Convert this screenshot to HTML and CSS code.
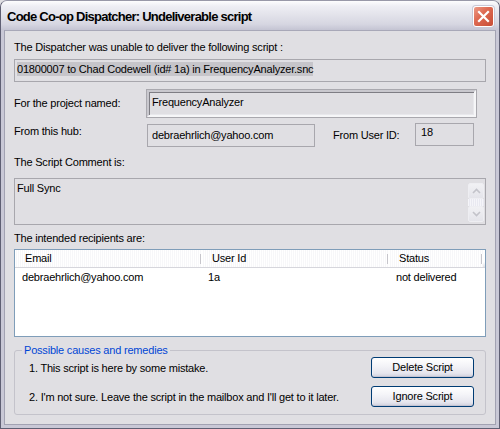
FILE: index.html
```html
<!DOCTYPE html>
<html>
<head>
<meta charset="utf-8">
<link rel="stylesheet" href="styles.css">
</head>
<body>
<div class="window">
  <div class="titlebar">
    <span class="title">Code Co-op Dispatcher: Undeliverable script</span>
    <span class="close"><svg width="13" height="13" viewBox="0 0 13 13"><path d="M2 2 L11 11 M11 2 L2 11" stroke="#fff" stroke-width="2.2" stroke-linecap="square"/></svg></span>
  </div>
  <div class="content">
    <div class="label l1">The Dispatcher was unable to deliver the following script :</div>
    <div class="field f1"><span class="sel">01800007 to Chad Codewell (id# 1a) in FrequencyAnalyzer.snc</span></div>

    <div class="row r-project">
      <div class="label rowlabel">For the project named:</div>
      <div class="field inset">FrequencyAnalyzer</div>
    </div>

    <div class="row r-hub">
      <div class="label rowlabel hublabel">From this hub:</div>
      <div class="field hub">debraehrlich@yahoo.com</div>
      <div class="label uidlabel">From User ID:</div>
      <div class="field uid">18</div>
    </div>

    <div class="label l-comment">The Script Comment is:</div>
    <div class="field comment">
      <span class="ctext">Full Sync</span>
      <div class="vscroll">
        <div class="sbtn"><svg width="9" height="6" viewBox="0 0 9 6"><path d="M1 5 L4.5 1.5 L8 5" fill="none" stroke="#c3c3ca" stroke-width="1.6"/></svg></div>
        <div class="strack"></div>
        <div class="sbtn"><svg width="9" height="6" viewBox="0 0 9 6"><path d="M1 1 L4.5 4.5 L8 1" fill="none" stroke="#c3c3ca" stroke-width="1.6"/></svg></div>
      </div>
    </div>

    <div class="label l-recip">The intended recipients are:</div>
    <div class="list">
      <div class="lhead">
        <div class="hcell c-email">Email</div>
        <div class="hcell c-uid">User Id</div>
        <div class="hcell c-status">Status</div>
      </div>
      <div class="lrow">
        <div class="cell c-email">debraehrlich@yahoo.com</div>
        <div class="cell c-uid">1a</div>
        <div class="cell c-status">not delivered</div>
      </div>
    </div>

    <div class="group">
      <div class="gtitle">Possible causes and remedies</div>
      <div class="grow g1">
        <div class="gtext">1. This script is here by some mistake.</div>
        <div class="btn">Delete Script</div>
      </div>
      <div class="grow g2">
        <div class="gtext">2. I'm not sure. Leave the script in the mailbox and I'll get to it later.</div>
        <div class="btn">Ignore Script</div>
      </div>
    </div>
  </div>
</div>
</body>
</html>
```
FILE: styles.css
```css
html, body {
  margin: 0;
  padding: 0;
  background: #e0dfe3;
}
body {
  width: 500px;
  height: 429px;
  overflow: hidden;
  font-family: "Liberation Sans", Arial, sans-serif;
  font-size: 11px;
  letter-spacing: -0.2px;
  color: #000;
}
.window {
  width: 500px;
  height: 429px;
  box-sizing: border-box;
  border: 1px solid #5f5f73;
  border-top-color: #9898a8;
  border-radius: 7px 7px 0 0;
  background: #c9c8d6;
  padding: 0 3px 3px 3px;
  display: flex;
  flex-direction: column;
}
.titlebar {
  height: 29px;
  margin: 0 -3px;
  padding: 0 5px 0 6px;
  display: flex;
  align-items: center;
  justify-content: space-between;
  border-radius: 6px 6px 0 0;
  background: linear-gradient(#fdfdfe 0%, #eeeef4 18%, #e2e2ea 50%, #d6d6e1 80%, #c4c4d3 100%);
}
.title {
  font-family: "Liberation Sans", Arial, sans-serif;
  font-weight: bold;
  font-size: 13px;
  color: #000;
  letter-spacing: -0.75px;
  padding-top: 1px;
}
.close {
  width: 19px;
  height: 19px;
  border: 1px solid #fff;
  border-radius: 3px;
  background: linear-gradient(135deg, #ec9a86 0%, #de6a52 40%, #c84d36 100%);
  display: flex;
  align-items: center;
  justify-content: center;
  box-shadow: 0 0 0 1px #c9c8d6;
  margin-top: 1px;
}
.content {
  flex: 1;
  background: #e0dfe3;
  border: 1px solid #a2a2b2;
  border-top-color: #a8a8b8;
  padding: 0 9px 0 9px;
  display: flex;
  flex-direction: column;
}
.label {
  line-height: 13px;
  white-space: nowrap;
}
.l1 { margin-top: 10px; }
.field {
  box-sizing: border-box;
  border: 1px solid #a8a7ad;
  background: #e0dfe3;
  white-space: nowrap;
  line-height: 13px;
}
.f1 {
  height: 23px;
  margin-top: 5px;
  padding: 3px 2px;
}
.sel { background: #c6c5ca; padding: 1px 0; }
.row {
  display: flex;
  align-items: flex-start;
}
.r-project {
  margin-top: 8px;
  height: 27px;
}
.rowlabel { width: 133px; padding-top: 7px; }
.inset {
  width: 329px;
  height: 27px;
  border: 2px solid #c9c8ce;
  border-right-color: #f6f6f8;
  border-bottom-color: #f6f6f8;
  box-shadow: inset 1px 1px 0 #7e7d84, inset -1px -1px 0 #e8e8ec, 0 0 0 1px #a9a8ae;
  padding: 4px 3px;
  background: #e0dfe3;
}
.r-hub { margin-top: 6px; }
.hublabel { padding-top: 2px; }
.hub {
  width: 168px;
  height: 23px;
  margin-top: 1px;
  padding: 4px 4px;
}
.uidlabel {
  margin-left: 18px;
  padding-top: 6px;
  width: 82px;
}
.uid {
  width: 59px;
  height: 23px;
  padding: 2px 5px;
}
.l-comment { margin-top: 9px; }
.comment {
  margin-top: 9px;
  height: 47px;
  display: flex;
  justify-content: space-between;
  padding: 2px 1px 2px 2px;
}
.ctext { padding-top: 1px; }
.vscroll {
  width: 16px;
  display: flex;
  flex-direction: column;
  margin-top: 2px;
}
.sbtn {
  box-sizing: border-box;
  height: 16px;
  border: 1px solid #eeeef2;
  border-radius: 2px;
  background: linear-gradient(#f1f1f4, #e4e4ea);
  display: flex;
  align-items: center;
  justify-content: center;
}
.strack {
  flex: 1;
  background: repeating-linear-gradient(90deg, #f5f5f9 0 1px, #e9e9f1 1px 2px);
}
.l-recip { margin-top: 7px; }
.list {
  margin-top: 4px;
  width: 472px;
  height: 88px;
  box-sizing: border-box;
  border: 1px solid #7f9db9;
  background: #fff;
}
.lhead {
  display: flex;
  height: 18px;
  background: linear-gradient(#ffffff 0%, #ffffff 70%, #f0f0f2 85%, #e2e2e6 100%);
  border-bottom: 1px solid #d6d6dc;
  box-sizing: border-box;
}
.hcell {
  box-sizing: border-box;
  padding-left: 10px;
  line-height: 17px;
  position: relative;
  background: repeating-linear-gradient(90deg, #fff 0 1px, #f7f7f9 1px 2px);
}
.hcell::after {
  content: "";
  position: absolute;
  right: 0;
  top: 4px;
  bottom: 3px;
  width: 2px;
  border-left: 1px solid #c6c5cb;
  border-right: 1px solid #fff;
  box-sizing: border-box;
}
.c-email { width: 187px; }
.c-uid { width: 187px; }
.c-status { width: 94px; }
.lrow {
  display: flex;
  margin-top: 2px;
  line-height: 14px;
}
.cell { box-sizing: border-box; padding-left: 7px; }
.lrow .c-uid { padding-left: 6px; }
.lrow .c-status { padding-left: 7px; }
.group {
  position: relative;
  margin-top: 13px;
  height: 65px;
  box-sizing: border-box;
  border: 1px solid #c4c3cb;
  border-radius: 3px;
  padding: 6px 11px 0 14px;
}
.gtitle {
  position: absolute;
  top: -7px;
  left: 7px;
  padding: 0 2px;
  background: #e0dfe3;
  color: #0046d5;
  line-height: 13px;
}
.grow {
  display: flex;
  justify-content: space-between;
  align-items: center;
}
.g2 { margin-top: 8px; }
.gtext { white-space: nowrap; }
.btn {
  width: 103px;
  height: 21px;
  box-sizing: border-box;
  border: 1px solid #003c74;
  border-radius: 3px;
  background: linear-gradient(#ffffff 0%, #f4f4f8 40%, #e6e6ee 80%, #cfcfdc 100%);
  box-shadow: inset 0 -1px 0 #c4c4d2, inset 1px 0 0 #f0f0f6;
  display: flex;
  align-items: center;
  justify-content: center;
  line-height: 13px;
}
```
